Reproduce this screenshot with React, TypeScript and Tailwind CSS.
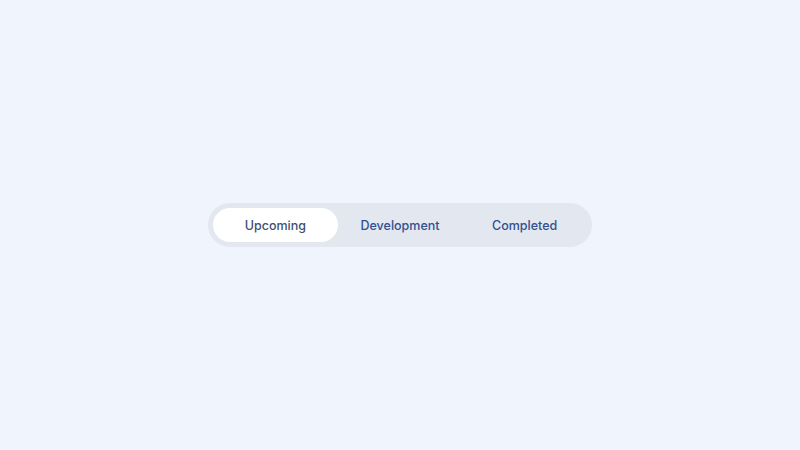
import { useState } from "react";

const tabs = ["Upcoming", "Development", "Completed"];

export default function App() {
  const [active, setActive] = useState(0);

  return (
    <main
      className="w-[800px] h-[450px] bg-[#f0f4fc] flex items-center justify-center"
      style={{ fontFamily: "Inter, 'Noto Sans', sans-serif" }}
    >
      <div className="flex w-[384px] p-[5px] bg-[#e2e7f0] rounded-full">
        {tabs.map((t, i) => (
          <button
            key={t}
            onClick={() => setActive(i)}
            className={
              "flex-1 h-[34px] pt-[2px] rounded-full text-[12.5px] font-medium " +
              (i === active
                ? "bg-white text-[#3d4f73]"
                : "text-[#33508f]")
            }
          >
            {t}
          </button>
        ))}
      </div>
    </main>
  );
}
